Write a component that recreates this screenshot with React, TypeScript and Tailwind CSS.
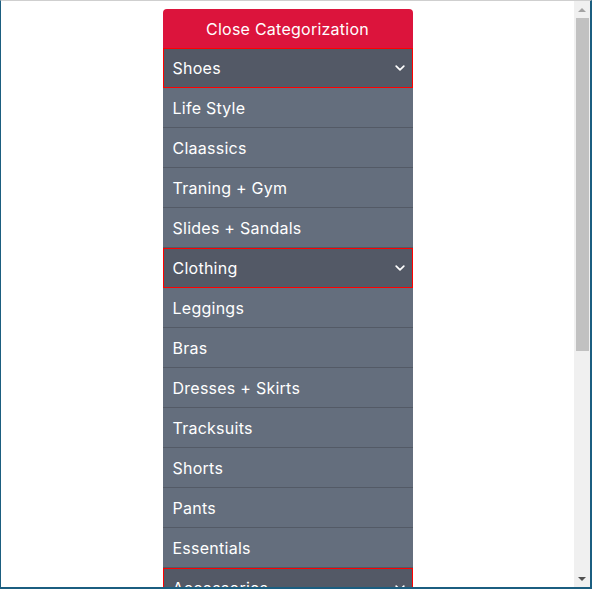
import React from "react";

const Chevron = () => (
  <svg width="10" height="6" viewBox="0 0 10 6" fill="none" className="shrink-0">
    <path d="M1.2 1.2 L5 4.8 L8.8 1.2" stroke="white" strokeWidth="1.7" strokeLinecap="round" strokeLinejoin="round" />
  </svg>
);

const Category = ({ label }: { label: string }) => (
  <div className="h-10 flex items-center justify-between pl-[9px] pr-[7px] bg-[#535966] border border-[#ff0000] text-white">
    <span>{label}</span>
    <Chevron />
  </div>
);

const Item = ({ label }: { label: string }) => (
  <div className="h-10 flex items-center pl-[10px] bg-[#646e7d] border-b border-[#535a66] text-white">
    {label}
  </div>
);

export default function App() {
  const shoes = ["Life Style", "Claassics", "Traning + Gym", "Slides + Sandals"];
  const clothing = ["Leggings", "Bras", "Dresses + Skirts", "Tracksuits", "Shorts", "Pants", "Essentials"];
  return (
    <div
      className="w-[592px] h-[589px] overflow-hidden flex bg-white border-l border-l-[#1b5e80] border-t border-t-[#cfcfcf] border-r-2 border-r-[#1b5e80] border-b-2 border-b-[#1b5e80]"
      style={{ fontFamily: "Inter, 'Open Sans', sans-serif" }}
    >
      <div className="flex-1 min-w-0 overflow-hidden">
        <div className="w-[250px] mx-auto mt-2 text-[16px] tracking-[0.25px]">
          <div className="h-[39px] flex items-center justify-center bg-[#dc143c] text-white rounded-t-[4px]">
            Close Categorization
          </div>
          <Category label="Shoes" />
          {shoes.map((s) => (
            <Item key={s} label={s} />
          ))}
          <Category label="Clothing" />
          {clothing.map((s) => (
            <Item key={s} label={s} />
          ))}
          <Category label="Accessories" />
        </div>
      </div>
      <div className="w-[16px] shrink-0 bg-[#f0f0f0] flex flex-col items-center">
        <div className="h-[17px] flex items-center justify-center">
          <div className="w-0 h-0 border-l-[4px] border-r-[4px] border-b-[4px] border-l-transparent border-r-transparent border-b-[#a3a3a3]" />
        </div>
        <div className="w-[13px] h-[333px] bg-[#c1c1c1]" />
        <div className="flex-1" />
        <div className="h-[17px] flex items-center justify-center">
          <div className="w-0 h-0 border-l-[4px] border-r-[4px] border-t-[4px] border-l-transparent border-r-transparent border-t-[#505050]" />
        </div>
      </div>
    </div>
  );
}
